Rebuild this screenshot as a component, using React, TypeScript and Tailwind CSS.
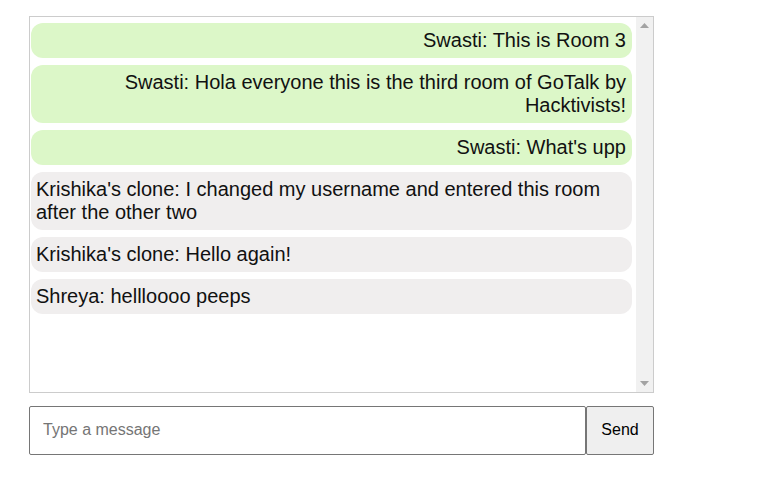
import React from "react";

const messages = [
  { text: "Swasti: This is Room 3", mine: true },
  { text: "Swasti: Hola everyone this is the third room of GoTalk by Hacktivists!", mine: true },
  { text: "Swasti: What's upp", mine: true },
  { text: "Krishika's clone: I changed my username and entered this room after the other two", mine: false },
  { text: "Krishika's clone: Hello again!", mine: false },
  { text: "Shreya: hellloooo peeps", mine: false },
];

export default function App() {
  return (
    <div
      className="w-[772px] h-[498px] bg-white pl-[29px] pt-[16px]"
      style={{ fontFamily: '"Liberation Sans", Arial, sans-serif' }}
    >
      <div className="w-[625px] h-[377px] border border-[#cccccc] flex">
        <div className="flex-1 flex flex-col gap-[7px] pt-[6px] pl-[1px] pr-[4px]">
          {messages.map((m, i) => (
            <div
              key={i}
              className={`rounded-[12px] pl-[5px] pr-[6px] py-[6px] text-[20px] leading-[23px] text-[#111] ${
                m.mine ? "bg-[#dcf7c8] text-right" : "bg-[#f0eeee] text-left"
              }`}
            >
              {m.text}
            </div>
          ))}
        </div>
        <div className="w-[17px] bg-[#f1f1f1] flex flex-col justify-between items-center py-[6px]">
          <svg width="9" height="5" viewBox="0 0 9 5">
            <polygon points="0,5 9,5 4.5,0" fill="#a3a3a3" />
          </svg>
          <svg width="9" height="5" viewBox="0 0 9 5">
            <polygon points="0,0 9,0 4.5,5" fill="#a3a3a3" />
          </svg>
        </div>
      </div>
      <div className="flex mt-[13px] w-[625px] h-[49px]">
        <input
          type="text"
          placeholder="Type a message"
          className="flex-1 h-full border border-[#767676] rounded-[2px] pl-[13px] pr-[13px] pb-[2px] text-[16px] text-[#111] placeholder:text-[#757575] outline-none"
          style={{ fontFamily: '"Liberation Sans", Arial, sans-serif' }}
        />
        <button
          className="w-[68px] h-full border border-[#767676] rounded-[2px] bg-[#efefef] text-[16px] text-black pb-[2px]"
          style={{ fontFamily: '"Liberation Sans", Arial, sans-serif' }}
        >
          Send
        </button>
      </div>
    </div>
  );
}
